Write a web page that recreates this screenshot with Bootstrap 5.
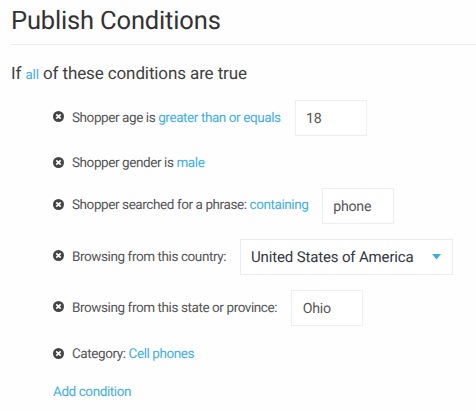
<!DOCTYPE html>
<html lang="en">
<head>
<meta charset="utf-8">
<meta name="viewport" content="width=device-width, initial-scale=1">
<title>Publish Conditions</title>
<link href="https://cdn.jsdelivr.net/npm/bootstrap@5.3.0/dist/css/bootstrap.min.css" rel="stylesheet">
<style>
body{font-family:Roboto,"Liberation Sans",sans-serif;font-size:13.5px;letter-spacing:-.415px;line-height:20px;color:#555;background:#fefefe;overflow:hidden;text-rendering:geometricPrecision}
.page{padding-left:11px}
.page-title{font-size:25.5px;letter-spacing:-.16px;line-height:30px;color:#333;padding:6px 0 8px;height:45px;border-bottom:1px solid #ebebf5}
.intro{font-size:17px;letter-spacing:-.11px;line-height:24px;color:#404040;margin-top:17px}
.intro a{font-size:13.35px}
a{color:#3eaee6}
.conditions{padding-left:42px;margin-top:12px}
.cond{height:36px}
.cond.slim{height:20px}
.cond .label-text{white-space:pre}
.cond.phrase .label-text{padding-bottom:2px}
.cond svg.remove{width:11px;height:11px;margin:0 8px 3px 0;flex:none}
.cond.phrase svg.remove{margin-bottom:4px}
.cond.slim svg.remove{margin-bottom:1px}
.box,.box:focus{width:72px;height:36px;border:1px solid #ededf3;border-radius:0;font-size:14.2px;letter-spacing:-.25px;color:#555;padding:2px 11px 0 10.5px;margin-left:14px;background:#fff;box-shadow:none;text-rendering:inherit}
.cond.phrase .box{margin-left:13.3px}
.picker,.picker:focus{width:213px;color:#32373f;border-color:#ebebf5;font-size:15px;letter-spacing:-.15px;padding:0 11px 0 10px}
</style>
</head>
<body>
<svg class="d-none"><symbol id="remove" viewBox="0 0 11 11"><circle cx="5.5" cy="5.5" r="5.5" fill="#444"/><path d="M3.3 3.3 7.7 7.7M7.7 3.3 3.3 7.7" stroke="#fff" stroke-width="1.7"/></symbol></svg>
<main class="page">
  <h1 class="page-title fw-normal m-0">Publish Conditions</h1>
  <p class="intro mb-0">If <a href="#" class="text-decoration-none">all</a> of these conditions are true</p>
  <ul class="conditions list-unstyled mb-0">
    <li class="cond d-flex align-items-center">
      <svg class="remove"><use href="#remove"/></svg>
      <span class="label-text">Shopper age is <a href="#" class="text-decoration-none">greater than or equals</a></span>
      <input class="box form-control" value="18" aria-label="Age">
    </li>
    <li class="cond slim d-flex align-items-center" style="margin-top:17px">
      <svg class="remove"><use href="#remove"/></svg>
      <span class="label-text">Shopper gender is <a href="#" class="text-decoration-none">male</a></span>
    </li>
    <li class="cond phrase d-flex align-items-center" style="margin-top:15px">
      <svg class="remove"><use href="#remove"/></svg>
      <span class="label-text">Shopper searched for a phrase: <a href="#" class="text-decoration-none">containing</a></span>
      <input class="box form-control" value="phone" aria-label="Phrase">
    </li>
    <li class="cond d-flex align-items-center" style="margin-top:15px">
      <svg class="remove"><use href="#remove"/></svg>
      <span class="label-text">Browsing from this country:</span>
      <div class="box picker d-flex align-items-center justify-content-between">
        <span>United States of America</span>
        <svg width="9" height="6" viewBox="0 0 9 6"><path d="M0 0h9L4.5 5.5z" fill="#3eaee6"/></svg>
      </div>
    </li>
    <li class="cond d-flex align-items-center" style="margin-top:15px">
      <svg class="remove"><use href="#remove"/></svg>
      <span class="label-text">Browsing from this state or province:</span>
      <input class="box form-control" value="Ohio" aria-label="State or province">
    </li>
    <li class="cond slim d-flex align-items-center" style="margin-top:18px">
      <svg class="remove"><use href="#remove"/></svg>
      <span class="label-text">Category: <a href="#" class="text-decoration-none">Cell phones</a></span>
    </li>
    <li class="cond slim d-flex align-items-center" style="margin-top:18px"><a href="#" class="text-decoration-none">Add condition</a></li>
  </ul>
</main>
<script src="https://cdn.jsdelivr.net/npm/bootstrap@5.3.0/dist/js/bootstrap.bundle.min.js"></script>
</body>
</html>
